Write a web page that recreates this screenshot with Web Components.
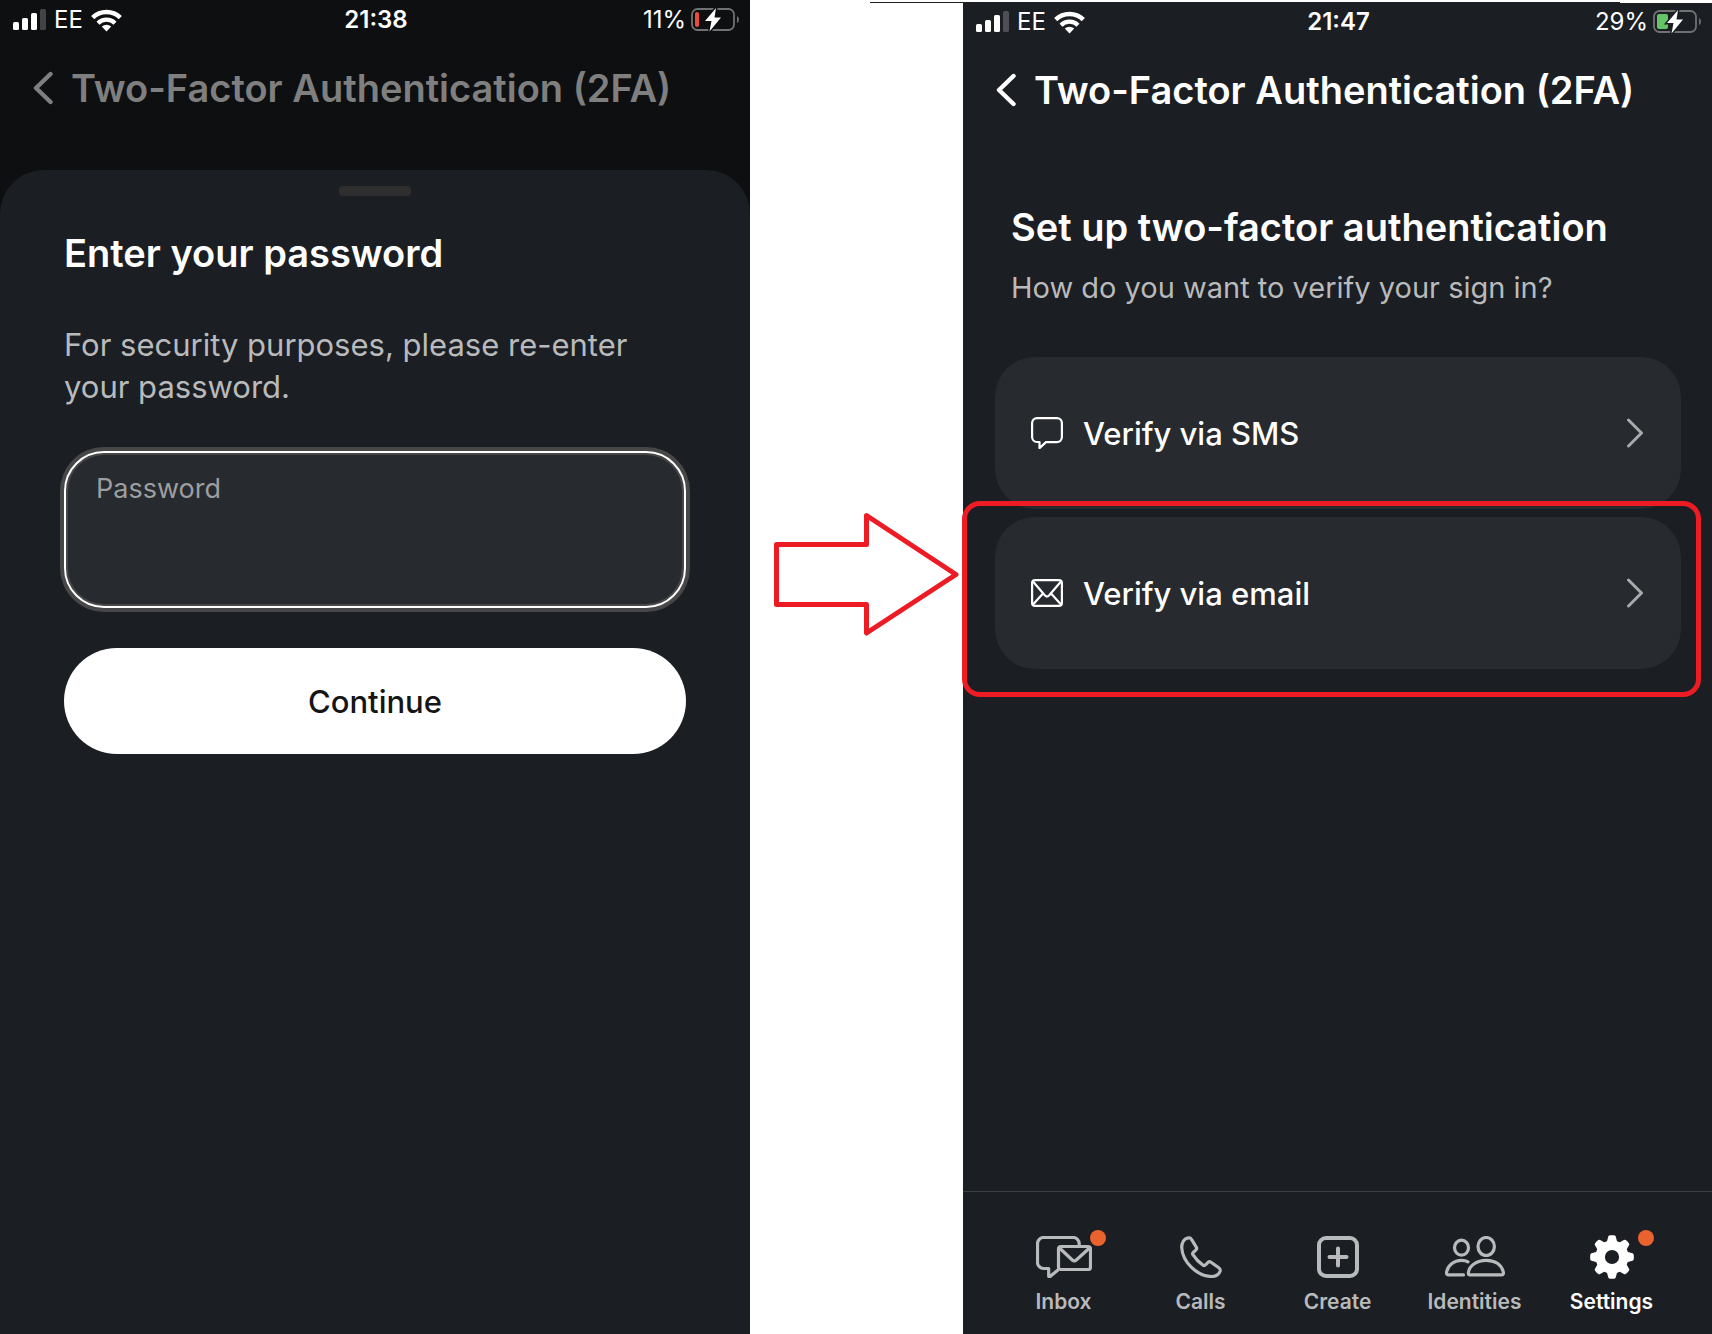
<!DOCTYPE html>
<html lang="en">
<head>
<meta charset="utf-8">
<meta name="viewport" content="width=device-width, initial-scale=1">
<title>Two-Factor Authentication</title>
<style>
  body {
    margin: 0;
    background: #fff;
    font-family: Inter, "Noto Sans", sans-serif;
  }
</style>
</head>
<body>
<guide-page>
  <phone-screen slot="before" class="dimmed">
    <status-bar slot="status" carrier="EE" time="21:38" battery="11"></status-bar>
    <screen-header slot="header">Two-Factor Authentication (2FA)</screen-header>
    <bottom-sheet>
      <span slot="title">Enter your password</span>
      <span slot="text">For security purposes, please re-enter your password.</span>
      <password-field label="Password"></password-field>
      <main-button>Continue</main-button>
    </bottom-sheet>
  </phone-screen>

  <flow-arrow slot="arrow"></flow-arrow>

  <phone-screen slot="after">
    <status-bar slot="status" carrier="EE" time="21:47" battery="29"></status-bar>
    <screen-header slot="header">Two-Factor Authentication (2FA)</screen-header>
    <verify-panel>
      <span slot="title">Set up two-factor authentication</span>
      <span slot="text">How do you want to verify your sign in?</span>
      <verify-option icon="sms">Verify via SMS</verify-option>
      <verify-option icon="email" marked>Verify via email</verify-option>
    </verify-panel>
    <tab-bar slot="footer">
      <tab-item icon="inbox" dot>Inbox</tab-item>
      <tab-item icon="calls">Calls</tab-item>
      <tab-item icon="create">Create</tab-item>
      <tab-item icon="identities">Identities</tab-item>
      <tab-item icon="settings" dot active>Settings</tab-item>
    </tab-bar>
  </phone-screen>
</guide-page>

<script>
const teeth = [0, 45, 90, 135, 180, 225, 270, 315]
  .map((a) => `<path transform="rotate(${a} 22 22)" d="M16.5 8 L18.3 1.5 Q18.6 0.5 19.8 0.3 Q22 0 24.2 0.3 Q25.4 0.5 25.7 1.5 L27.5 8Z"/>`)
  .join("");

const icons = {
  back: [20, 34, `<path fill="none" stroke="currentColor" stroke-width="4.4" stroke-linecap="round" stroke-linejoin="round" d="M17.5 3 3 17l14.500 14"/>`],
  next: [18, 30, `<path fill="none" stroke="currentColor" stroke-width="3" stroke-linecap="round" stroke-linejoin="round" d="M2.5 2 15.5 15 2.5 28"/>`],
  signal: [33, 22, `<g fill="currentColor"><rect y="13" width="6" height="8" rx="1.5"/><rect x="9" y="9" width="6" height="12" rx="1.5"/><rect x="18" y="4" width="6" height="17" rx="1.5"/><rect x="27" width="6" height="21" rx="1.5" opacity=".22"/></g>`],
  wifi: [31, 23, `<g fill="none" stroke="currentColor" stroke-width="4.5"><path d="M1.7 8.7a19.5 19.5 0 0 1 27.6 0"/><path stroke-width="4.2" d="M7 14.2a12 12 0 0 1 17 0"/></g><path fill="currentColor" d="M15.5 22.5 10.8 17.6a6.7 6.7 0 0 1 9.4 0z"/>`],
  sms: [32, 32, `<path fill="none" stroke="currentColor" stroke-width="2.2" stroke-linejoin="round" d="M6 1.1h20a5 5 0 0 1 4.900 5v14a5 5 0 0 1-5 5H15l-6.500 6V25H6a5 5 0 0 1-4.900-5V6a5 5 0 0 1 4.900-4.900z"/>`],
  email: [32, 28, `<g fill="none" stroke="currentColor" stroke-width="2.2" stroke-linejoin="round"><rect x="1.100" y="1.100" width="29.800" height="25.800" rx="3"/><path d="M2 2.5 14 16.5q2 2 4 0L30 2.5M2 25.5 11.5 15M30 25.5 20.5 15"/></g>`],
  inbox: [56, 42, `<g fill="none" stroke="currentColor" stroke-width="3.2" stroke-linejoin="round"><path d="M43.2 9V7.5a6 6 0 0 0-6-6H7.5a6 6 0 0 0-6 6v19a6 6 0 0 0 6 6H12.7V40.5q1 .5 2-.5L22.5 33.5"/><rect x="22.5" y="10.5" width="32" height="23" rx="2.5"/><path d="M23.5 12 36.3 24q2 1.8 4 0L53.5 12"/></g>`],
  calls: [42, 42, `<path fill="none" stroke="currentColor" stroke-width="3.2" stroke-linejoin="round" d="M8.5 1.8C4 2.5 1.7 7 1.7 11.5 2.5 26 17 40.5 32 40.5c4 0 7.5-2.5 8.2-5.5q.4-2-1.4-3.3L31 26.2Q29.3 25 28 26.3L25.5 28.9Q24.3 30 23 29.2C19 26.5 15.2 22.3 12.9 18.7Q12.2 17.5 13.2 16.5L16 13.8Q17.2 12.6 16.3 11.2L11.5 3.4Q10.4 1.5 8.5 1.8Z"/>`],
  create: [42, 42, `<g fill="none" stroke="currentColor" stroke-width="4" stroke-linecap="round"><rect x="2" y="2" width="38" height="38" rx="7"/><path d="M21 12.5v17M12.5 21h17"/></g>`],
  identities: [60, 42, `<g fill="none" stroke="currentColor" stroke-width="3.2" stroke-linejoin="round" stroke-linecap="round"><ellipse cx="16.5" cy="11.7" rx="7" ry="7.5"/><ellipse cx="41.2" cy="10.5" rx="8.2" ry="9"/><path d="M24.5 38.9h32q2 0 2-2C57 29 50.5 24.3 41.2 24.3S24.5 29.5 23.5 36q-.5 2.9 1 2.900z"/><path d="M18.5 38.9H3q-1.500 0-1.500-2C2.5 29.5 9 24.3 16.5 24.3q4 0 6.500 1.500"/></g>`],
  settings: [44, 44, `<g fill="currentColor">${teeth}</g><circle cx="22" cy="22" r="11.8" fill="none" stroke="currentColor" stroke-width="9.400"/>`],
};

function drawIcon(name) {
  const [w, h, body] = icons[name];
  return `<svg width="${w}" height="${h}" viewBox="0 0 ${w} ${h}" aria-hidden="true">${body}</svg>`;
}

// every element renders once from its attributes
class BaseElement extends HTMLElement {
  constructor() {
    super();
    this.attachShadow({ mode: "open" });
    this.shadowRoot.innerHTML = `
      <style>
        :host { display: block; box-sizing: border-box; }
        svg { display: block; flex: none; }
        h1, h2, p { margin: 0; }
        ${this.css()}
      </style>
      ${this.html()}`;
  }
}

class GuidePage extends BaseElement {
  css() {
    return `
      :host {
        display: grid;
        grid-template-columns: 750fr 213fr 749fr;
        min-height: 100vh;
      }
      .before, .after { display: flex; flex-direction: column; }
      .after { position: relative; padding-top: 2px; }
      /* the screen's top edge steps down near the right side */
      .after::before {
        content: "";
        position: absolute;
        top: 2px;
        right: 0;
        width: 92px;
        height: 1px;
        background: #fff;
      }
      ::slotted(phone-screen) { flex: 1; }
    `;
  }
  html() {
    return `
      <div class="before"><slot name="before"></slot></div>
      <slot name="arrow"></slot>
      <div class="after"><slot name="after"></slot></div>`;
  }
}

class PhoneScreen extends BaseElement {
  css() {
    return `
      :host {
        display: flex;
        flex-direction: column;
        background: #1b1e23;
        color: #fff;
        --title: #fff;
      }
      :host(.dimmed) { background: #0e0f11; --title: #7f7f7f; }
      main { flex: 1; display: flex; flex-direction: column; }
      ::slotted(bottom-sheet) { flex: 1; }
    `;
  }
  html() {
    return `
      <slot name="status"></slot>
      <slot name="header"></slot>
      <main><slot></slot></main>
      <slot name="footer"></slot>`;
  }
}

class StatusBar extends BaseElement {
  css() {
    return `
      :host {
        display: grid;
        grid-template-columns: 1fr auto 1fr;
        align-items: center;
        height: 40px;
        padding: 0 11px 0 13px;
        font-size: 24px;
        line-height: 40px;
      }
      .left, .right { display: flex; align-items: center; gap: 8px; }
      .right { justify-content: flex-end; gap: 5px; }
      time { font-weight: 600; }
    `;
  }
  html() {
    const level = Number(this.getAttribute("battery"));
    const width = level < 20 ? 4 : 11;
    const color = level < 20 ? "#eb4b3d" : "#65c466";
    const back = level < 20 ? "#0e0f11" : "#1b1e23";
    return `
      <div class="left">${drawIcon("signal")}<span>${this.getAttribute("carrier")}</span>${drawIcon("wifi")}</div>
      <time>${this.getAttribute("time")}</time>
      <div class="right">
        <span>${level}%</span>
        <svg width="48" height="24" viewBox="0 0 48 24" aria-hidden="true">
          <rect x="1" y="1" width="42" height="21" rx="5.5" fill="none" stroke="#707173" stroke-width="1.8"/>
          <path d="M46 8q2 1 2 3.500T46 15z" fill="#707173"/>
          <rect x="4" y="4" width="${width}" height="15" rx="2" fill="${color}"/>
          <path d="M25 0 14 13h6.500L18.5 23.5 30 9.5h-6.500z" fill="${back}" stroke="${back}" stroke-width="3"/>
          <path d="M25 0 14 13h6.500L18.5 23.5 30 9.5h-6.500z" fill="#fff"/>
        </svg>
      </div>`;
  }
}

class ScreenHeader extends BaseElement {
  css() {
    return `
      :host {
        display: flex;
        align-items: center;
        gap: 18px;
        padding: 24px 33px 0;
        color: var(--title);
      }
      button { padding: 0; border: 0; background: none; color: inherit; }
      h1 { font-size: 38px; line-height: 48px; font-weight: 600; white-space: nowrap; }
    `;
  }
  html() {
    return `<button type="button" aria-label="Back">${drawIcon("back")}</button><h1><slot></slot></h1>`;
  }
}

class BottomSheet extends BaseElement {
  css() {
    return `
      :host {
        margin-top: 58px;
        padding: 16px 64px;
        background: #1b1e23;
        border-radius: 44px 44px 0 0;
      }
      .handle {
        width: 72px;
        height: 10px;
        margin: 0 auto 33px;
        border-radius: 4px;
        background: #2e2e2e;
      }
      h2 { font-size: 38px; line-height: 48px; font-weight: 600; }
      p { margin: 47px 0 43px; font-size: 31px; line-height: 42px; color: #b9babb; }
    `;
  }
  html() {
    return `
      <div class="handle"></div>
      <h2><slot name="title"></slot></h2>
      <p><slot name="text"></slot></p>
      <slot></slot>`;
  }
}

class PasswordField extends BaseElement {
  css() {
    return `
      :host {
        padding: 20px 30px 25px;
        border: 2px solid #fff;
        border-radius: 40px;
        background: #272a2f;
        box-shadow: 0 0 0 4px #474747, inset 0 0 0 2px #474747;
      }
      label { display: block; font-size: 27px; line-height: 32px; color: #9d9e9f; }
      input {
        display: block;
        box-sizing: border-box;
        width: 100%;
        height: 76px;
        padding: 0;
        border: 0;
        outline: 0;
        background: none;
        color: #fff;
        font-family: inherit;
        font-size: 31px;
      }
    `;
  }
  html() {
    return `<label for="password">${this.getAttribute("label")}</label><input id="password" type="password">`;
  }
}

class MainButton extends BaseElement {
  css() {
    return `
      :host { margin-top: 40px; }
      button {
        display: block;
        width: 100%;
        height: 106px;
        border: 0;
        border-radius: 53px;
        background: #fff;
        color: #151515;
        font-family: inherit;
        font-size: 31px;
        font-weight: 500;
      }
    `;
  }
  html() {
    return `<button type="button"><slot></slot></button>`;
  }
}

class FlowArrow extends BaseElement {
  css() {
    return `
      :host { position: relative; padding: 512px 4px 0 24px; }
      svg { width: 100%; height: auto; }
      /* thin rule running into the second screen */
      .rule { position: absolute; top: 2px; right: 0; width: 93px; height: 1px; background: #1b1e23; }
    `;
  }
  html() {
    return `
      <div class="rule"></div>
      <svg viewBox="0 0 185 124" role="img" aria-label="Next step">
        <path fill="none" stroke="#ed1c24" stroke-width="5" stroke-linejoin="round" d="M2.5 32.5h90V3.5L182 62.5 92.5 121V92.5h-90z"/>
      </svg>`;
  }
}

class VerifyPanel extends BaseElement {
  css() {
    return `
      :host { padding: 89px 31px 0 32px; }
      h2, p { padding: 0 16px; white-space: nowrap; }
      h2 { font-size: 38px; line-height: 48px; font-weight: 600; }
      p { margin: 16px 0 48px; font-size: 29px; line-height: 42px; color: #b9babb; }
      .options { display: grid; gap: 8px; }
    `;
  }
  html() {
    return `
      <h2><slot name="title"></slot></h2>
      <p><slot name="text"></slot></p>
      <div class="options"><slot></slot></div>`;
  }
}

class VerifyOption extends BaseElement {
  css() {
    return `
      :host { position: relative; }
      button {
        display: flex;
        align-items: center;
        gap: 20px;
        width: 100%;
        height: 152px;
        padding: 0 37px 0 36px;
        border: 0;
        border-radius: 40px;
        background: #272a2f;
        color: #fff;
        font-family: inherit;
        font-size: 31px;
        font-weight: 500;
        text-align: left;
      }
      .label { flex: 1; }
      .next { color: #a9aaab; }
      :host([marked])::after {
        content: "";
        position: absolute;
        inset: -16px -20px -28px -33px;
        border: 5px solid #ed1c24;
        border-radius: 18px;
        pointer-events: none;
      }
    `;
  }
  html() {
    return `
      <button type="button">
        ${drawIcon(this.getAttribute("icon"))}
        <span class="label"><slot></slot></span>
        <span class="next">${drawIcon("next")}</span>
      </button>`;
  }
}

class TabBar extends BaseElement {
  css() {
    return `
      nav {
        display: grid;
        grid-template-columns: repeat(5, 1fr);
        padding: 42px 32px 20px;
        border-top: 1px solid #3d4043;
      }
    `;
  }
  html() {
    return `<nav><slot></slot></nav>`;
  }
}

class TabItem extends BaseElement {
  css() {
    return `
      :host { color: #b9babb; }
      :host([active]) { color: #fff; }
      button {
        display: flex;
        flex-direction: column;
        align-items: center;
        gap: 10px;
        width: 100%;
        padding: 0;
        border: 0;
        background: none;
        color: inherit;
        font-family: inherit;
        font-size: 21px;
        font-weight: 600;
        line-height: 24px;
      }
      .icon { position: relative; display: flex; align-items: center; height: 46px; }
      .dot {
        position: absolute;
        top: -4px;
        left: calc(50% + 26px);
        width: 16px;
        height: 16px;
        border-radius: 50%;
        background: #ea622d;
      }
    `;
  }
  html() {
    return `
      <button type="button">
        <span class="icon">${drawIcon(this.getAttribute("icon"))}${this.hasAttribute("dot") ? `<span class="dot"></span>` : ""}</span>
        <span><slot></slot></span>
      </button>`;
  }
}

customElements.define("guide-page", GuidePage);
customElements.define("phone-screen", PhoneScreen);
customElements.define("status-bar", StatusBar);
customElements.define("screen-header", ScreenHeader);
customElements.define("bottom-sheet", BottomSheet);
customElements.define("password-field", PasswordField);
customElements.define("main-button", MainButton);
customElements.define("flow-arrow", FlowArrow);
customElements.define("verify-panel", VerifyPanel);
customElements.define("verify-option", VerifyOption);
customElements.define("tab-bar", TabBar);
customElements.define("tab-item", TabItem);
</script>
</body>
</html>
